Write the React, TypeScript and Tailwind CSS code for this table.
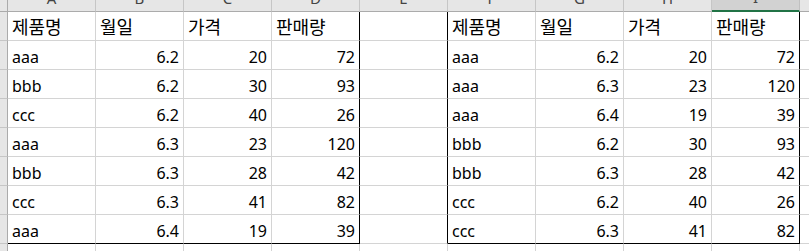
import React from "react";

const cols = ["A", "B", "C", "D", "E", "F", "G", "H", "I"];

const heads = ["제품명", "월일", "가격", "판매량"];

const left = [
    ["aaa", "6.2", "20", "72"],
    ["bbb", "6.2", "30", "93"],
    ["ccc", "6.2", "40", "26"],
    ["aaa", "6.3", "23", "120"],
    ["bbb", "6.3", "28", "42"],
    ["ccc", "6.3", "41", "82"],
    ["aaa", "6.4", "19", "39"],
];

const right = [
    ["aaa", "6.2", "20", "72"],
    ["aaa", "6.3", "23", "120"],
    ["aaa", "6.4", "19", "39"],
    ["bbb", "6.2", "30", "93"],
    ["bbb", "6.3", "28", "42"],
    ["ccc", "6.2", "40", "26"],
    ["ccc", "6.3", "41", "82"],
];

function Cell({ c, r, text }: { c: number; r: number; text: string }) {
    const blackRight = c === 3 || c === 4 || c === 8;
    const blackBottom = r === 7 && c !== 4;
    const isHead = r === 0;
    const isText = isHead || c === 0 || c === 5;
    return (
        <div
            className={[
                "w-[88px] shrink-0 h-full flex items-end px-[4px] border-r border-b",
                blackRight ? "border-r-black" : "border-r-[#d4d4d4]",
                blackBottom ? "border-b-black" : "border-b-[#d4d4d4]",
                isText ? "justify-start" : "justify-end",
                isHead
                    ? "text-[18px] pb-[5px] font-['Noto_Sans_CJK_KR',sans-serif]"
                    : "text-[16px] pb-[4px] font-['Noto_Sans','Noto_Sans_CJK_KR',sans-serif]",
            ].join(" ")}
        >
            <span className="leading-none text-black whitespace-nowrap">{text}</span>
        </div>
    );
}

export default function App() {
    const rows: string[][] = [];
    for (let i = 0; i < 8; i++) {
        const l = i === 0 ? heads : left[i - 1];
        const rr = i === 0 ? heads : right[i - 1];
        rows.push([...l, "", ...rr]);
    }

    return (
        <div className="w-[809px] h-[251px] overflow-hidden bg-white select-none">
            {/* column letters, cut off at the top */}
            <div className="flex h-[12px]">
                <div className="w-[8px] shrink-0 bg-[#e6e6e6] border-r border-b border-[#ababab]" />
                {cols.map((l, i) => (
                    <div
                        key={l}
                        className={
                            i === 8
                                ? "w-[88px] shrink-0 h-full overflow-hidden flex items-end justify-center bg-[#d2d2d2] border-r border-r-[#c0c0c0] border-b-2 border-b-[#217346]"
                                : "w-[88px] shrink-0 h-full overflow-hidden flex items-end justify-center bg-[#e6e6e6] border-r border-r-[#c6c6c6] border-b border-b-[#ababab]"
                        }
                    >
                        <span className="text-[15px] leading-none mb-[5px] text-[#444] font-['Noto_Sans',sans-serif]">{l}</span>
                    </div>
                ))}
                <div className="flex-1 bg-[#e6e6e6] border-b border-[#ababab]" />
            </div>

            {rows.map((row, r) => (
                <div key={r} className="flex h-[29px]">
                    <div className="w-[8px] shrink-0 bg-[#e6e6e6] border-r border-b border-r-[#ababab] border-b-[#c6c6c6]" />
                    {row.map((t, c) => (
                        <Cell key={c} c={c} r={r} text={t} />
                    ))}
                    <div className="flex-1 border-b border-[#d4d4d4]" />
                </div>
            ))}

            <div className="flex h-[10px]">
                <div className="w-[8px] shrink-0 bg-[#e6e6e6] border-r border-[#ababab]" />
                {cols.map((l) => (
                    <div key={l} className="w-[88px] shrink-0 border-r border-[#d4d4d4]" />
                ))}
            </div>
        </div>
    );
}
